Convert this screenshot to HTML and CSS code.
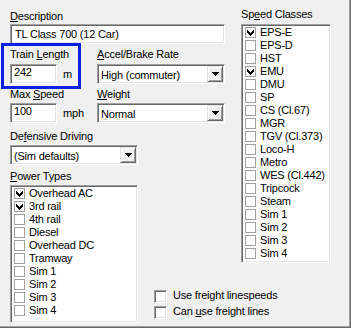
FILE: index.html
```html
<!DOCTYPE html>
<html>
<head>
<meta charset="utf-8">
<link rel="stylesheet" href="styles.css">
</head>
<body>
<div class="dialog">
  <div class="left">
    <div class="lbl"><u>D</u>escription</div>
    <div class="field desc">TL Class 700 (12 Car)</div>

    <div class="row r1">
      <div class="grp g1">
        <div class="lbl">Train <u>L</u>ength</div>
        <div class="inline c1"><div class="field num">242</div><span class="unit">m</span></div>
      </div>
      <div class="grp">
        <div class="lbl"><u>A</u>ccel/Brake Rate</div>
        <div class="combo c1"><span class="val">High (commuter)</span><span class="btn"><svg width="7" height="4" viewBox="0 0 7 4" shape-rendering="crispEdges"><path d="M0 0h7v1h-1v1h-1v1h-1v1h-1v-1h-1v-1h-1v-1h-1z"/></svg></span></div>
      </div>
    </div>

    <div class="row r2">
      <div class="grp g1">
        <div class="lbl">Max <u>S</u>peed</div>
        <div class="inline c2"><div class="field num">100</div><span class="unit">mph</span></div>
      </div>
      <div class="grp">
        <div class="lbl"><u>W</u>eight</div>
        <div class="combo c2"><span class="val">Normal</span><span class="btn"><svg width="7" height="4" viewBox="0 0 7 4" shape-rendering="crispEdges"><path d="M0 0h7v1h-1v1h-1v1h-1v1h-1v-1h-1v-1h-1v-1h-1z"/></svg></span></div>
      </div>
    </div>

    <div class="lbl def">De<u>f</u>ensive Driving</div>
    <div class="combo c3"><span class="val">(Sim defaults)</span><span class="btn"><svg width="7" height="4" viewBox="0 0 7 4" shape-rendering="crispEdges"><path d="M0 0h7v1h-1v1h-1v1h-1v1h-1v-1h-1v-1h-1v-1h-1z"/></svg></span></div>

    <div class="bottom">
      <div class="power">
        <div class="lbl"><u>P</u>ower Types</div>
        <div class="list plist">
          <div class="item"><span class="cb on"></span>Overhead AC</div>
          <div class="item"><span class="cb on"></span>3rd rail</div>
          <div class="item"><span class="cb"></span>4th rail</div>
          <div class="item"><span class="cb"></span>Diesel</div>
          <div class="item"><span class="cb"></span>Overhead DC</div>
          <div class="item"><span class="cb"></span>Tramway</div>
          <div class="item"><span class="cb"></span>Sim 1</div>
          <div class="item"><span class="cb"></span>Sim 2</div>
          <div class="item"><span class="cb"></span>Sim 3</div>
          <div class="item"><span class="cb"></span>Sim 4</div>
        </div>
      </div>
      <div class="checks">
        <div class="chk"><span class="box3d"></span><span>Use freight linespeeds</span></div>
        <div class="chk"><span class="box3d"></span><span>Can <u>u</u>se freight lines</span></div>
      </div>
    </div>
  </div>

  <div class="right">
    <div class="lbl">Sp<u>e</u>ed Classes</div>
    <div class="list slist">
      <div class="item"><span class="cb on"></span>EPS-E</div>
      <div class="item"><span class="cb"></span>EPS-D</div>
      <div class="item"><span class="cb"></span>HST</div>
      <div class="item"><span class="cb on"></span>EMU</div>
      <div class="item"><span class="cb"></span>DMU</div>
      <div class="item"><span class="cb"></span>SP</div>
      <div class="item"><span class="cb"></span>CS (Cl.67)</div>
      <div class="item"><span class="cb"></span>MGR</div>
      <div class="item"><span class="cb"></span>TGV (Cl.373)</div>
      <div class="item"><span class="cb"></span>Loco-H</div>
      <div class="item"><span class="cb"></span>Metro</div>
      <div class="item"><span class="cb"></span>WES (Cl.442)</div>
      <div class="item"><span class="cb"></span>Tripcock</div>
      <div class="item"><span class="cb"></span>Steam</div>
      <div class="item"><span class="cb"></span>Sim 1</div>
      <div class="item"><span class="cb"></span>Sim 2</div>
      <div class="item"><span class="cb"></span>Sim 3</div>
      <div class="item"><span class="cb"></span>Sim 4</div>
    </div>
  </div>

  <div class="highlight"></div>
</div>
</body>
</html>
```
FILE: styles.css
```css
* { box-sizing: border-box; margin: 0; padding: 0; }
html, body { margin: 0; background: #f0f0f0; }
body {
  font: 11px/13px "Liberation Sans", Arial, sans-serif;
  letter-spacing: -0.2px;
  color: #000;
  width: 351px;
  height: 328px;
  overflow: hidden;
}
u { text-decoration: underline; text-underline-offset: 1px; }

.dialog {
  position: relative;
  width: 351px;
  height: 328px;
  display: flex;
  gap: 16px;
  padding: 8px 0 0 10px;
  background: #f0f0f0;
  box-shadow: inset -1px -1px 0 #696969, inset -2px -2px 0 #a0a0a0;
}

.left { width: 215px; padding-top: 2px; display: flex; flex-direction: column; }
.right { width: 90px; display: flex; flex-direction: column; }

.lbl { height: 13px; line-height: 13px; white-space: nowrap; }

.field {
  height: 20px;
  background: #fff;
  border: 1px solid;
  border-color: #a0a0a0 #fff #fff #a0a0a0;
  box-shadow: inset 1px 1px 0 #696969, inset -1px -1px 0 #e3e3e3;
  padding: 0 3px;
  white-space: nowrap;
}
.desc { margin-top: 1px; line-height: 18px; padding-left: 4px; }

.row { display: flex; }
.r1 { margin-top: 4px; }
.r2 { margin-top: 4px; }
.g1 { width: 87px; }
.c1 { margin-top: 3px; }
.c2 { margin-top: 2px; }

.inline { display: flex; align-items: flex-start; }
.num { width: 47px; line-height: 14px; padding-left: 3px; }
.unit { margin-left: 6px; line-height: 20px; }

.combo {
  width: 128px;
  height: 20px;
  display: flex;
  align-items: stretch;
  background: #fff;
  border: 1px solid;
  border-color: #a0a0a0 #fff #fff #a0a0a0;
  box-shadow: inset 1px 1px 0 #696969, inset -1px -1px 0 #e3e3e3;
  padding: 1px;
}
.combo .val { flex: 1; padding-left: 2px; line-height: 19px; white-space: nowrap; overflow: hidden; }
.combo .btn {
  width: 16px;
  background: #f0f0f0;
  border: 1px solid;
  border-color: #e3e3e3 #696969 #696969 #e3e3e3;
  box-shadow: inset 1px 1px 0 #fff, inset -1px -1px 0 #a0a0a0;
  display: flex;
  align-items: center;
  justify-content: center;
}
.combo .btn svg { display: block; margin-left: 1px; }

.def { margin-top: 7px; }
.c3 { margin-top: 2px; }

.bottom { display: flex; margin-top: 5px; }
.power { width: 128px; }

.list {
  background: #fff;
  border: 1px solid;
  border-color: #a0a0a0 #fff #fff #a0a0a0;
  box-shadow: inset 1px 1px 0 #696969, inset -1px -1px 0 #e3e3e3;
  padding: 1px;
}
.plist { margin-top: 2px; height: 138px; width: 128px; }
.slist { margin-top: 3px; height: 239px; width: 90px; }

.item {
  height: 13px;
  line-height: 13px;
  display: flex;
  align-items: center;
  white-space: nowrap;
}
.cb {
  width: 11px;
  height: 11px;
  margin: 0 4px 0 2px;
  border: 1px solid #a0a0a0;
  background: #fff;
  flex: none;
  position: relative;
}
.cb.on::after {
  content: "";
  position: absolute;
  left: 1px;
  top: 1px;
  width: 7px;
  height: 7px;
  background:
    linear-gradient(#000, #000) 6px 0 / 1px 3px no-repeat,
    linear-gradient(#000, #000) 5px 1px / 1px 3px no-repeat,
    linear-gradient(#000, #000) 4px 2px / 1px 3px no-repeat,
    linear-gradient(#000, #000) 3px 3px / 1px 3px no-repeat,
    linear-gradient(#000, #000) 2px 2px / 1px 3px no-repeat,
    linear-gradient(#000, #000) 1px 1px / 1px 3px no-repeat,
    linear-gradient(#000, #000) 0 0 / 1px 3px no-repeat;
  top: 2px;
}

.checks {
  align-self: flex-end;
  margin-left: 16px;
  margin-bottom: 2px;
  white-space: nowrap;
}
.chk { height: 16px; display: flex; align-items: flex-start; }
.chk span:last-child { line-height: 13px; margin-top: 0; }
.box3d {
  width: 13px;
  height: 13px;
  margin-top: 1px;
  margin-right: 6px;
  background: #fff;
  border: 1px solid;
  border-color: #a0a0a0 #fff #fff #a0a0a0;
  box-shadow: inset 1px 1px 0 #696969, inset -1px -1px 0 #e3e3e3;
  flex: none;
}

.highlight {
  position: absolute;
  left: 1px;
  top: 43px;
  width: 80px;
  height: 46px;
  border: 3px solid #0b22e6;
}
```
